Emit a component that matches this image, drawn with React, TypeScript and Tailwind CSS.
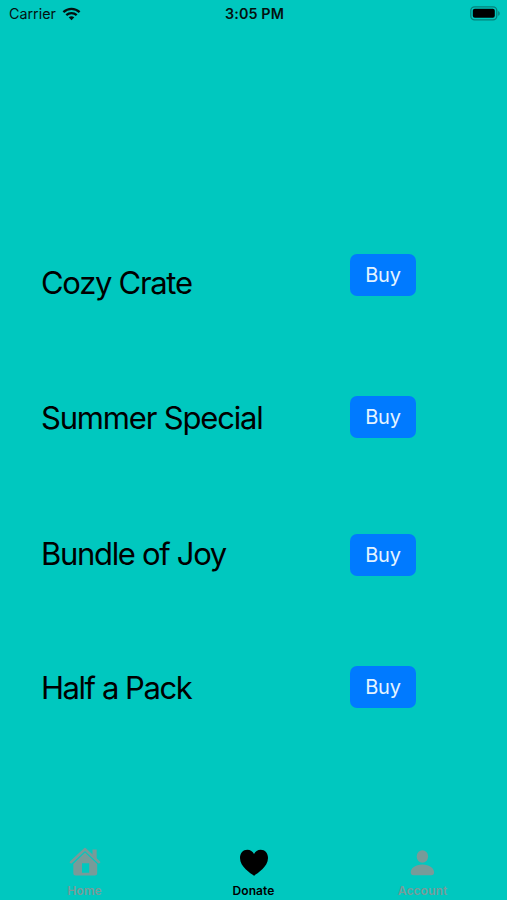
const PACKS = [
  { name: 'Cozy Crate', row: 'mt-[226px]', label: 'mt-[9px] tracking-[-1.3px]' },
  { name: 'Summer Special', row: 'mt-[100px]', label: 'mt-0.5 tracking-[-1.18px]' },
  { name: 'Bundle of Joy', row: 'mt-[96px]', label: 'tracking-[-1.32px]' },
  { name: 'Half a Pack', row: 'mt-[90px]', label: 'mt-0.5 tracking-[-1.45px]' },
];

function WifiIcon() {
  return (
    <svg className="ml-[6px] h-[14px] w-[19px]" viewBox="0 0 18 14" fill="none" stroke="#04110f" strokeWidth="2.3">
      <path d="M.9 5.1C5.5.7 12.5.7 17.1 5.1" />
      <path d="M3.8 8.2c3-2.8 7.4-2.8 10.4 0" />
      <path d="M6.2 10.3c1.7-1.3 3.9-1.3 5.6 0L9 13.2z" fill="#04110f" stroke="none" />
    </svg>
  );
}

function BatteryIcon() {
  return (
    <svg className="h-[15px] w-[30px]" viewBox="0 0 30 15">
      <rect x=".8" y=".8" width="26" height="13" rx="3.8" fill="none" stroke="#05817b" strokeWidth="1.3" />
      <rect x="2.8" y="2.8" width="22" height="9" rx="2" />
      <path d="M28.2 5v4.8c1-.5 1.5-1.3 1.5-2.4s-.5-1.9-1.5-2.4z" fill="#05817b" />
    </svg>
  );
}

function HomeIcon() {
  return (
    <svg className="h-8 w-8" viewBox="0 0 32 32" fill="currentColor">
      <path d="M2 17.2 16 4.200l14 13" fill="none" stroke="currentColor" strokeWidth="2.6" strokeLinecap="round" strokeLinejoin="round" />
      <path d="M23.500 4.500h4.200v9.500l-4.200-4z" />
      <path fillRule="evenodd" d="M16 7.600 28.200 19v9.200q0 2.300-2.300 2.300H6.600q-2.300 0-2.300-2.300V19zM13 18.200v9.600h7.200v-9.600z" />
    </svg>
  );
}

function HeartIcon() {
  return (
    <svg className="h-8 w-8" viewBox="0 0 32 32" fill="currentColor">
      <path d="M16 30.800C12.500 28.400 2 21.900 2 13.100 2 8.300 5 4.800 9.300 4.800c3.100 0 5.400 1.700 6.700 4.300 1.300-2.600 3.600-4.300 6.700-4.300 4.300 0 7.300 3.500 7.300 8.300 0 8.800-10.500 15.300-14 17.700z" />
    </svg>
  );
}

function PersonIcon() {
  return (
    <svg className="h-8 w-8" viewBox="0 0 32 32" fill="currentColor">
      <ellipse cx="15.400" cy="11.500" rx="5.700" ry="6.200" />
      <path d="M3.700 27.300c0-4 4.500-7.800 11.700-7.800s11.700 3.800 11.700 7.800c0 2-1 2.900-3 2.900H6.700c-2 0-3-.9-3-2.900z" />
    </svg>
  );
}

const TABS = [
  { label: 'Home', icon: HomeIcon, color: 'text-[#789b99]' },
  { label: 'Donate', icon: HeartIcon, color: 'text-black' },
  { label: 'Account', icon: PersonIcon, color: 'text-[#789b99]' },
];

export default function App() {
  return (
    <div className="flex h-[900px] w-[507px] flex-col overflow-hidden bg-[#00c8bf] font-[Inter,sans-serif] text-black">
      {/* Status bar */}
      <header className="grid h-7 grid-cols-3 items-center pb-px pl-[9px] pr-[7px] text-[14.3px] text-[#04110f]">
        <div className="flex items-center">
          <span>Carrier</span>
          <WifiIcon />
        </div>
        <div className="text-center font-semibold tracking-[0.15px]">3:05 PM</div>
        <div className="flex justify-end">
          <BatteryIcon />
        </div>
      </header>

      <main className="flex-1">
        {PACKS.map((pack) => (
          <div key={pack.name} className={`flex h-[42px] justify-between pl-[41px] pr-[91px] ${pack.row}`}>
            <h2 className={`text-[31px] leading-[40px] whitespace-nowrap ${pack.label}`}>{pack.name}</h2>
            <button className="h-[42px] w-[66px] rounded-[7px] bg-[#007aff] text-[20px] tracking-[-0.2px] text-[#e4f4ff]">Buy</button>
          </div>
        ))}
      </main>

      <nav className="grid h-[55px] grid-cols-3">
        {TABS.map((tab) => {
          const Icon = tab.icon;
          return (
            <div key={tab.label} className={`flex flex-col items-center ${tab.color}`}>
              <Icon />
              <span className="mt-[6px] text-[12px] leading-4 font-semibold tracking-[0.1px]">{tab.label}</span>
            </div>
          );
        })}
      </nav>
    </div>
  );
}
